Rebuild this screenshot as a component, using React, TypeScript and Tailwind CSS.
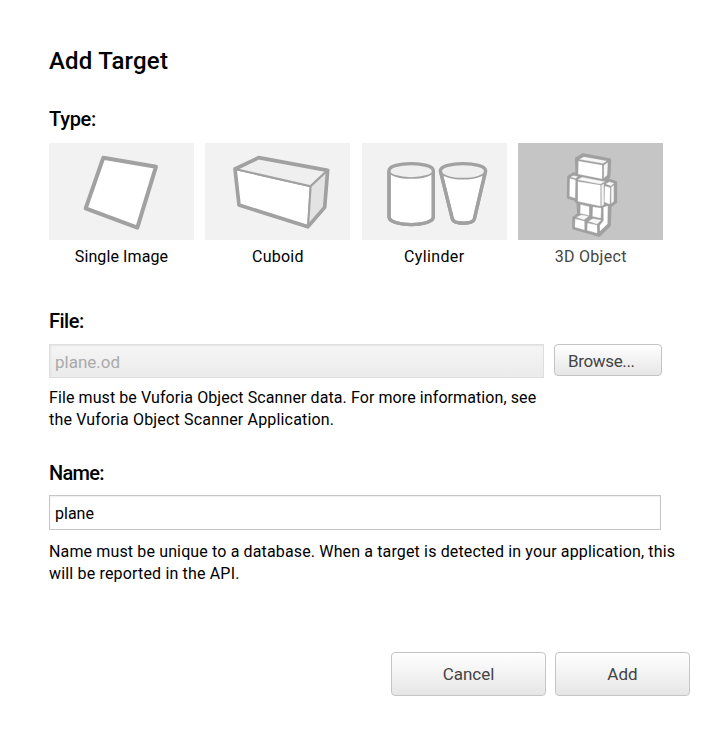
import type { ReactNode } from 'react';

const ICON = 'block h-[97px] w-[145px]';

function SingleImageIcon() {
  return (
    <svg className={ICON} viewBox="12 15 435 291">
      <polygon points="175,59 333,86 277,269 122,211" fill="#fff" stroke="#a1a1a1" strokeWidth="12" strokeLinejoin="round" />
    </svg>
  );
}

function CuboidIcon() {
  return (
    <svg className={ICON} viewBox="15 15 435 291" strokeLinejoin="round" stroke="#a1a1a1">
      <polygon points="105,93 332,145 324,268 117,202" fill="#fff" strokeWidth="6" />
      <polygon points="105,93 176,59 383,97 332,145" fill="#efefef" strokeWidth="6" />
      <polygon points="332,145 383,97 374,208 324,268" fill="#e3e3e3" strokeWidth="6" />
      <polygon points="105,93 176,59 383,97 374,208 324,266 117,201" fill="none" strokeWidth="11" />
    </svg>
  );
}

function CylinderIcon() {
  return (
    <svg className={ICON} viewBox="15 15 435 291" strokeLinejoin="round" stroke="#a1a1a1">
      <path d="M96 98V238C100 267 225 267 229 238V98" fill="#fff" strokeWidth="10" />
      <ellipse cx="162.500" cy="98" rx="66.500" ry="22" fill="#efefef" strokeWidth="5" />
      <path d="M96 98C96 70 229 70 229 98V238C225 267 100 267 96 238Z" fill="none" strokeWidth="10" />
      <path d="M250 98L286 243C291 260 347 260 352 243L386 98" fill="#fff" strokeWidth="10" />
      <ellipse cx="318" cy="99" rx="67" ry="23" fill="#efefef" strokeWidth="5" />
      <path d="M250 98C252 70 384 70 386 98L352 243C347 260 291 260 286 243Z" fill="none" strokeWidth="10" />
    </svg>
  );
}

function RobotIcon() {
  return (
    <svg className={ICON} viewBox="15 15 435 291">
      <polygon
        points="190,62 210,50 290,65 288,114 281,124 308,133 308,192 291,204 289,262 258,292 182,270 182,240 197,229 195,196 186,184 166,178 167,116 182,107 192,109"
        fill="#a0a0a0" stroke="#a0a0a0" strokeWidth="9" strokeLinejoin="round"
      />
      <g fill="#fff" stroke="#fff" strokeWidth="1">
        <polygon points="197,70 267,82 267,122 196,108" />
        <polygon points="195,131 262,142 262,204 195,190" />
        <polygon points="171,122 187,126 186,180 170,175" />
        <polygon points="276,145 291,149 290,198 275,192" />
        <polygon points="203,200 228,206 228,232 202,226" />
        <polygon points="240,207 264,211 263,240 239,235" />
        <polygon points="272,208 284,204 283,258 261,279 261,262 272,248" />
        <polygon points="187,243 214,250 214,275 186,267" />
        <polygon points="224,256 252,262 252,285 223,277" />
      </g>
      <g fill="#f7f7f7" stroke="#f7f7f7" strokeWidth="1">
        <polygon points="200,64 213,57 280,69 270,76" />
        <polygon points="273,82 284,74 282,112 273,119" />
        <polygon points="195,125 207,118 275,131 262,138" />
        <polygon points="266,142 272,138 272,200 266,203" />
        <polygon points="174,117 182,113 194,116 188,121" />
        <polygon points="279,138 289,132 302,136 294,143" />
        <polygon points="295,148 302,142 302,190 295,196" />
        <polygon points="191,238 205,231 226,235 213,245" />
        <polygon points="227,250 240,242 264,247 252,258" />
      </g>
    </svg>
  );
}

function TypeTile({ label, labelClass, selected, children }: { label: string; labelClass: string; selected?: boolean; children: ReactNode }) {
  return (
    <button type="button" className="w-[145px] text-center">
      <div className={selected ? 'bg-[#c5c5c5]' : 'bg-[#f2f2f2]'}>{children}</div>
      <div className={`mt-[5px] h-6 text-base leading-6 whitespace-nowrap ${selected ? 'text-[#444]' : 'text-black'}`}>
        <span className={labelClass}>{label}</span>
      </div>
    </button>
  );
}

export default function App() {
  return (
    <main className="h-[741px] w-[715px] overflow-hidden bg-white pt-[45px] pl-[49px] font-['Roboto','Liberation_Sans',sans-serif] text-base text-black">
      <h1 className="h-8 text-2xl leading-8 font-medium"><span className="tracking-[0.2px]">Add Target</span></h1>

      <h2 className="mt-[30px] h-6 text-xl leading-[25px] font-medium"><span className="tracking-[-0.3px]">Type:</span></h2>
      <div className="mt-3 flex gap-[11.400px]">
        <TypeTile label="Single Image" labelClass="tracking-[0.1px]"><SingleImageIcon /></TypeTile>
        <TypeTile label="Cuboid" labelClass="tracking-[0.25px]"><CuboidIcon /></TypeTile>
        <TypeTile label="Cylinder" labelClass="tracking-[0.35px]"><CylinderIcon /></TypeTile>
        <TypeTile label="3D Object" labelClass="tracking-[0.3px]" selected><RobotIcon /></TypeTile>
      </div>

      <h2 className="mt-10 h-6 text-xl leading-6 font-medium"><span className="tracking-[-0.5px]">File:</span></h2>
      <div className="mt-[11px] flex items-start gap-[10px]">
        <div className="h-[34px] w-[495px] border border-[#dedede] bg-linear-to-b from-[#f5f5f5] to-[#ebebeb] pl-[5px] text-[17px] leading-[34px] text-[#aaa] shadow-[inset_1px_1px_2px_#e4e4e4]">
          <span>plane.od</span>
        </div>
        <button type="button" className="h-8 w-[108px] rounded-[4px] border border-[#c3c3c3] bg-linear-to-b from-white to-[#e6e6e6] pl-[13px] text-left text-[17px] leading-8 text-[#444]">
          <span className="tracking-[-0.35px]">Browse...</span>
        </button>
      </div>
      <p className="mt-[9px] text-base leading-[22px] whitespace-nowrap">
        <span className="tracking-[0.09px]">File must be Vuforia Object Scanner data. For more information, see</span><br />
        <span className="tracking-[0.17px]">the Vuforia Object Scanner Application.</span>
      </p>

      <h2 className="mt-[30px] h-6 text-xl leading-6 font-medium"><span className="tracking-[-0.7px]">Name:</span></h2>
      <div className="mt-[10px] h-[35px] w-[612px] border border-[#c6c6c6] bg-white pl-[5px] text-base leading-[35px] shadow-[inset_0_1px_2px_#eee]">
        <span>plane</span>
      </div>
      <p className="mt-[11px] text-base leading-[22px] whitespace-nowrap">
        <span className="tracking-[0.14px]">Name must be unique to a database. When a target is detected in your application, this</span><br />
        <span className="tracking-[0.17px]">will be reported in the API.</span>
      </p>

      <div className="mt-[67px] ml-[342px] flex gap-[9px] text-[17px] text-[#444]">
        <button type="button" className="h-11 w-[155px] rounded-[4px] border border-[#c5c5c5] bg-linear-to-b from-white to-[#e6e6e6] pt-[2px]"><span>Cancel</span></button>
        <button type="button" className="h-11 w-[135px] rounded-[4px] border border-[#c5c5c5] bg-linear-to-b from-white to-[#e6e6e6] pt-[2px]"><span>Add</span></button>
      </div>
    </main>
  );
}
